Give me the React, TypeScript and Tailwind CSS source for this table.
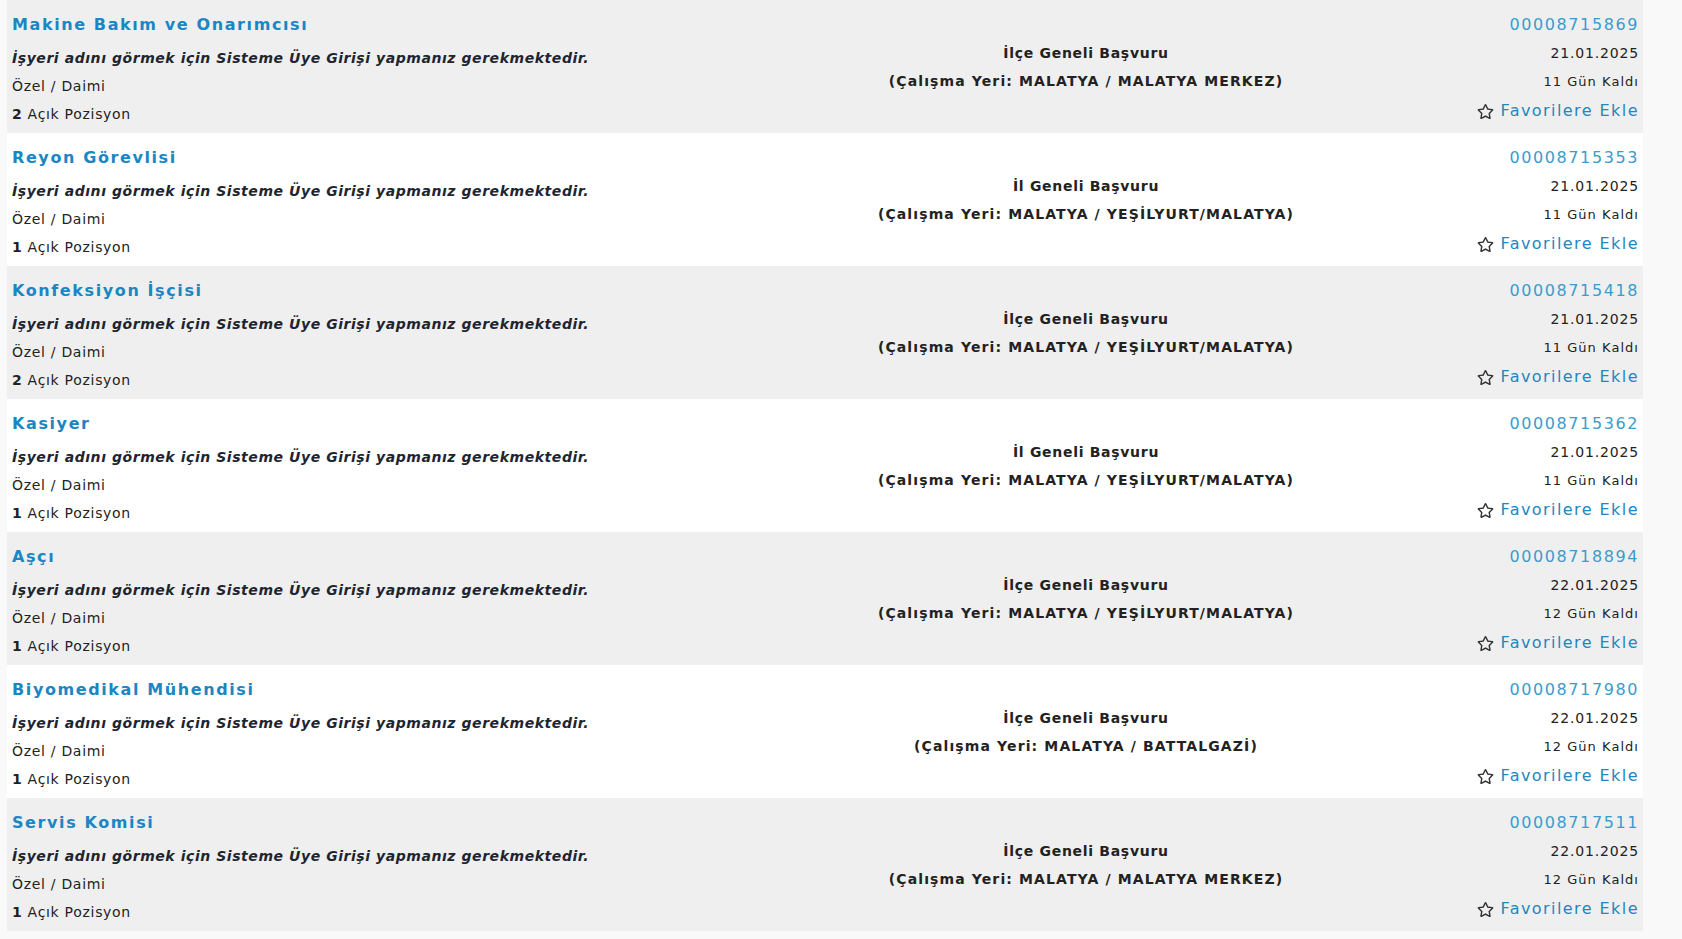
import { FaRegStar } from 'react-icons/fa'

interface Job {
  title: string
  positions: number
  scope: string
  place: string
  id: string
  date: string
  left: string
}

const jobs: Job[] = [
  { title: 'Makine Bakım ve Onarımcısı', positions: 2, scope: 'İlçe Geneli Başvuru', place: 'MALATYA / MALATYA MERKEZ', id: '00008715869', date: '21.01.2025', left: '11 Gün Kaldı' },
  { title: 'Reyon Görevlisi', positions: 1, scope: 'İl Geneli Başvuru', place: 'MALATYA / YEŞİLYURT/MALATYA', id: '00008715353', date: '21.01.2025', left: '11 Gün Kaldı' },
  { title: 'Konfeksiyon İşçisi', positions: 2, scope: 'İlçe Geneli Başvuru', place: 'MALATYA / YEŞİLYURT/MALATYA', id: '00008715418', date: '21.01.2025', left: '11 Gün Kaldı' },
  { title: 'Kasiyer', positions: 1, scope: 'İl Geneli Başvuru', place: 'MALATYA / YEŞİLYURT/MALATYA', id: '00008715362', date: '21.01.2025', left: '11 Gün Kaldı' },
  { title: 'Aşçı', positions: 1, scope: 'İlçe Geneli Başvuru', place: 'MALATYA / YEŞİLYURT/MALATYA', id: '00008718894', date: '22.01.2025', left: '12 Gün Kaldı' },
  { title: 'Biyomedikal Mühendisi', positions: 1, scope: 'İlçe Geneli Başvuru', place: 'MALATYA / BATTALGAZİ', id: '00008717980', date: '22.01.2025', left: '12 Gün Kaldı' },
  { title: 'Servis Komisi', positions: 1, scope: 'İlçe Geneli Başvuru', place: 'MALATYA / MALATYA MERKEZ', id: '00008717511', date: '22.01.2025', left: '12 Gün Kaldı' },
]

export default function App() {
  return (
    <div className="min-h-[939px] bg-[#f9f9f9] pl-[7px] pr-[39px] font-['DejaVu_Sans',Verdana,sans-serif] text-[#222]">
      {jobs.map((job, i) => (
        <JobRow key={job.id} job={job} striped={i % 2 === 0} />
      ))}
    </div>
  )
}

function JobRow({ job, striped }: { job: Job; striped: boolean }) {
  return (
    <div className={`grid h-[133px] grid-cols-[818px_522px_1fr] ${striped ? 'bg-[#efefef]' : 'bg-white'}`}>
      <div className="flex flex-col pl-[5px] pt-[11px]">
        <a className="text-[16px] font-bold leading-[28px] tracking-[0.1em] text-[#1a86c4]">{job.title}</a>
        <div className="mt-[5px] text-[14px] font-bold italic leading-[28px] tracking-[0.04em] text-[#1e2530]">
          İşyeri adını görmek için Sisteme Üye Girişi yapmanız gerekmektedir.
        </div>
        <div className="text-[14px] leading-[28px] tracking-[0.05em]">Özel / Daimi</div>
        <div className="text-[14px] leading-[28px] tracking-[0.05em]">
          <b>{job.positions}</b> Açık Pozisyon
        </div>
      </div>
      <div className="flex flex-col items-center justify-center pt-[1px] text-[14px] font-bold leading-[28px] text-[#222]">
        <div className="tracking-[0.05em]">{job.scope}</div>
        <div className="tracking-[0.08em]">(Çalışma Yeri: {job.place})</div>
      </div>
      <div className="flex flex-col items-end pr-[4px] pt-[11px]">
        <a className="text-[16px] leading-[28px] tracking-[0.1em] text-[#3a9ccd]">{job.id}</a>
        <div className="text-[14px] leading-[28px] tracking-[0.06em]">{job.date}</div>
        <div className="mt-[1px] text-[13px] leading-[28px] tracking-[0.08em]">{job.left}</div>
        <a className="mt-[1px] flex items-center gap-[6px] text-[16px] leading-[28px] tracking-[0.09em] text-[#2386bf]">
          <FaRegStar className="h-[17px] w-[17px] text-[#333]" />
          Favorilere Ekle
        </a>
      </div>
    </div>
  )
}
